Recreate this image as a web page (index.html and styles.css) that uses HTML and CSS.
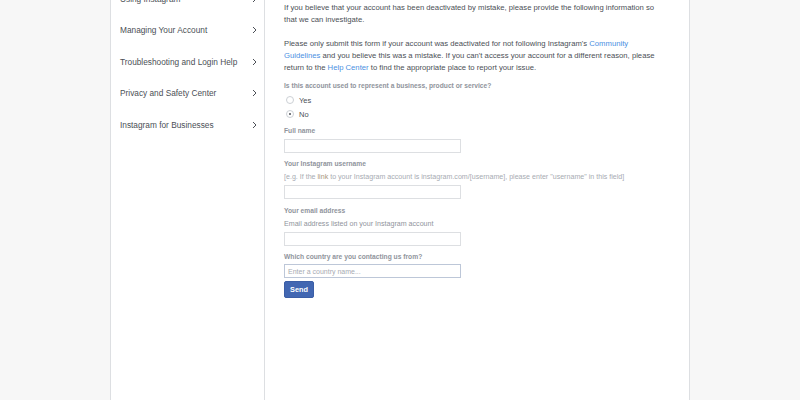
FILE: index.html
```html
<!DOCTYPE html>
<html>
<head>
<meta charset="utf-8">
<link rel="stylesheet" href="styles.css">
</head>
<body>
<div class="page">
  <aside class="sidebar">
    <a class="nav-item" href="#"><span>Using Instagram</span><svg class="chev" viewBox="0 0 5 8" width="5" height="8"><polyline points="1,1 4,4 1,7" fill="none" stroke="#4b4f56" stroke-width="1"/></svg></a>
    <a class="nav-item" href="#"><span>Managing Your Account</span><svg class="chev" viewBox="0 0 5 8" width="5" height="8"><polyline points="1,1 4,4 1,7" fill="none" stroke="#4b4f56" stroke-width="1"/></svg></a>
    <a class="nav-item" href="#"><span>Troubleshooting and Login Help</span><svg class="chev" viewBox="0 0 5 8" width="5" height="8"><polyline points="1,1 4,4 1,7" fill="none" stroke="#4b4f56" stroke-width="1"/></svg></a>
    <a class="nav-item" href="#"><span>Privacy and Safety Center</span><svg class="chev" viewBox="0 0 5 8" width="5" height="8"><polyline points="1,1 4,4 1,7" fill="none" stroke="#4b4f56" stroke-width="1"/></svg></a>
    <a class="nav-item" href="#"><span>Instagram for Businesses</span><svg class="chev" viewBox="0 0 5 8" width="5" height="8"><polyline points="1,1 4,4 1,7" fill="none" stroke="#4b4f56" stroke-width="1"/></svg></a>
  </aside>
  <main class="main">
    <p class="intro">If you believe that your account has been deactivated by mistake, please provide the following information so that we can investigate.</p>
    <p class="intro last">Please only submit this form if your account was deactivated for not following Instagram's <a href="#">Community Guidelines</a> and you believe this was a mistake. If you can't access your account for a different reason, please return to the <a href="#">Help Center</a> to find the appropriate place to report your issue.</p>

    <div class="field radios">
      <div class="label">Is this account used to represent a business, product or service?</div>
      <label class="radio"><span class="dot"></span>Yes</label>
      <label class="radio"><span class="dot checked"></span>No</label>
    </div>

    <div class="field">
      <div class="label spaced">Full name</div>
      <div class="input"></div>
    </div>

    <div class="field wide">
      <div class="label">Your Instagram username</div>
      <div class="hint light">[e.g. If the <a class="tan" href="#">link</a> to your Instagram account is instagram.com/[username], please enter "username" in this field]</div>
      <div class="input"></div>
    </div>

    <div class="field">
      <div class="label">Your email address</div>
      <div class="hint">Email address listed on your Instagram account</div>
      <div class="input"></div>
    </div>

    <div class="field last">
      <div class="label">Which country are you contacting us from?</div>
      <div class="input blue"><span class="ph">Enter a country name...</span></div>
    </div>

    <button class="send">Send</button>
  </main>
</div>
</body>
</html>
```
FILE: styles.css
```css
html, body {
  margin: 0;
  padding: 0;
  background: #f7f7f7;
  font-family: "Liberation Sans", Arial, sans-serif;
  overflow: hidden;
}
.page {
  width: 578px;
  margin: -17px 0 0 110px;
  min-height: 440px;
  background: #fff;
  border-left: 1px solid #dddfe2;
  border-right: 1px solid #dddfe2;
  display: flex;
}
.sidebar {
  width: 153px;
  border-right: 1px solid #dddfe2;
  flex-shrink: 0;
}
.nav-item {
  display: flex;
  align-items: center;
  justify-content: space-between;
  height: 31.5px;
  padding: 0 7px 0 9px;
  font-size: 8.3px;
  color: #4b4f56;
  text-decoration: none;
}
.chev { display: block; }
.main {
  padding: 19px 0 0 19px;
  flex: 1;
}
.intro {
  margin: 0 0 12px;
  font-size: 7.7px;
  line-height: 12px;
  color: #4b4f56;
  width: 375px;
}
.intro.last { margin-bottom: 7px; }
.intro a {
  color: #4a90e2;
  text-decoration: none;
}
.hint a.tan {
  color: #a8957a;
  text-decoration: none;
}
.field { margin-bottom: 5px; }
.field.radios { margin-bottom: 4px; }
.field.wide { margin-bottom: 6px; }
.field.last { margin-bottom: 3px; }
.label {
  font-size: 6.7px;
  font-weight: bold;
  color: #90949c;
  line-height: 10px;
  padding-top: 1px;
  margin-bottom: 2px;
}
.radios .label { padding-top: 0; margin-bottom: 2px; }
.label.spaced { margin-bottom: 3px; }
.radio {
  display: flex;
  align-items: center;
  height: 14px;
  font-size: 7.5px;
  color: #4b4f56;
}
.dot {
  width: 6px;
  height: 6px;
  border: 1px solid #ccd0d5;
  border-radius: 50%;
  margin: 0 5px 0 2px;
  display: flex;
  align-items: center;
  justify-content: center;
}
.dot.checked::after {
  content: "";
  width: 2px;
  height: 2px;
  border-radius: 50%;
  background: #4b4f56;
}
.hint {
  font-size: 7.1px;
  color: #90949c;
  line-height: 10px;
  padding-top: 1px;
  margin-bottom: 3px;
}
.hint.light { color: #a7abb2; }
.input {
  width: 175px;
  height: 12px;
  border: 1px solid #dddfe2;
  display: flex;
  align-items: center;
}
.input.blue { border-color: #bdc7d8; }
.ph {
  font-size: 7px;
  color: #a7abb2;
  padding-left: 3px;
}
.send {
  display: block;
  width: 30px;
  height: 17px;
  padding: 0;
  border: 1px solid #3b5ea6;
  background: #4267b2;
  color: #fff;
  font-family: "Liberation Sans", Arial, sans-serif;
  font-weight: bold;
  font-size: 7.3px;
  border-radius: 2px;
}
```
